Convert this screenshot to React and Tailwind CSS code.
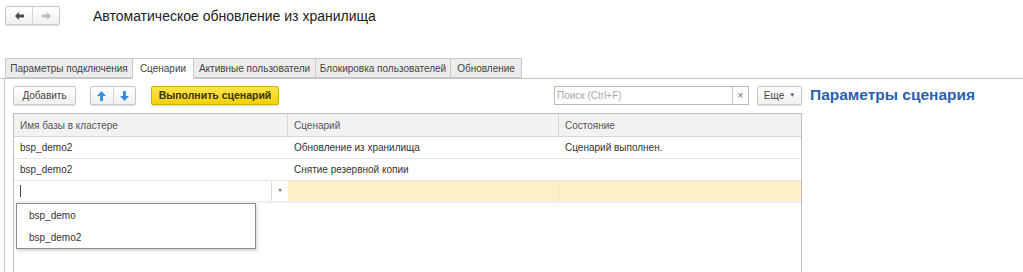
import React from 'react'

const TABS = [
  { label: 'Параметры подключения', w: 'w-[128px]' },
  { label: 'Сценарии', w: 'w-[62px]', active: true },
  { label: 'Активные пользователи', w: 'w-[123px]' },
  { label: 'Блокировка пользователей', w: 'w-[136px]' },
  { label: 'Обновление', w: 'w-[72px]' },
]

const ROWS = [
  { base: 'bsp_demo2', scenario: 'Обновление из хранилища', state: 'Сценарий выполнен.' },
  { base: 'bsp_demo2', scenario: 'Снятие резервной копии', state: '' },
]

const btn =
  'flex items-center justify-center h-[19px] rounded-[2px] border border-[#c6c6c6] bg-gradient-to-b from-white to-[#f0f0f0] shadow-[0_1px_1px_rgba(0,0,0,0.12)]'

function HArrow({ dir = 'left', color }) {
  const d = dir === 'left' ? 'M0 4 L4 0 V2.5 H9 V5.5 H4 V8 Z' : 'M9 4 L5 0 V2.5 H0 V5.5 H5 V8 Z'
  return (
    <svg width="9" height="8" viewBox="0 0 9 8" aria-hidden>
      <path d={d} fill={color} />
    </svg>
  )
}

function VArrow({ dir = 'up' }) {
  const d = dir === 'up' ? 'M4.5 0 L9 5 H6 V10 H3 V5 H0 Z' : 'M4.5 10 L9 5 H6 V0 H3 V5 H0 Z'
  return (
    <svg width="9" height="10" viewBox="0 0 9 10" aria-hidden>
      <path d={d} fill="#3a8ee0" />
    </svg>
  )
}

export default function App() {
  return (
    <div className="w-[1023px] h-[272px] overflow-hidden bg-white font-['Liberation_Sans',Arial,sans-serif] text-[10px] text-[#333]">
      {/* заголовок формы */}
      <div className="h-[58px] pt-[6px] pl-[5px] flex items-start">
        <div className="flex h-[19px] w-[55px] rounded-[2px] border border-[#c6c6c6] bg-gradient-to-b from-white to-[#f0f0f0] shadow-[0_1px_1px_rgba(0,0,0,0.12)]">
          <div className="flex-1 flex items-center justify-center border-r border-[#d4d4d4]">
            <HArrow dir="left" color="#4a4a4a" />
          </div>
          <div className="flex-1 flex items-center justify-center">
            <HArrow dir="right" color="#bdbdbd" />
          </div>
        </div>
        <div className="ml-[33px] text-[14px] leading-[20px] text-[#222] whitespace-nowrap">
          Автоматическое обновление из хранилища
        </div>
      </div>

      {/* вкладки */}
      <div className="flex items-end h-[21px] pl-[5px] border-b border-[#c4c4c4]">
        {TABS.map((t) => (
          <div
            key={t.label}
            className={`${t.w} -mr-px flex items-center justify-center whitespace-nowrap border border-[#c9c9c9] text-[#444] ${
              t.active ? 'h-[21px] -mb-px bg-white border-b-white' : 'h-[20px] bg-[#ececec]'
            }`}
          >
            {t.label}
          </div>
        ))}
      </div>

      {/* содержимое вкладки */}
      <div className="ml-[4px] h-[193px] border-l border-[#c4c4c4] pl-[8px] pt-[7px] flex">
        <div className="w-[789px] flex flex-col">
          <div className="flex items-center h-[19px]">
            <div className={`${btn} w-[63px] text-[#444]`}>Добавить</div>
            <div className="ml-[14px] flex h-[19px] w-[46px] rounded-[2px] border border-[#c6c6c6] bg-gradient-to-b from-white to-[#f0f0f0] shadow-[0_1px_1px_rgba(0,0,0,0.12)]">
              <div className="flex-1 flex items-center justify-center border-r border-[#d4d4d4]">
                <VArrow dir="up" />
              </div>
              <div className="flex-1 flex items-center justify-center">
                <VArrow dir="down" />
              </div>
            </div>
            <div className="ml-[15px] flex items-center justify-center h-[19px] w-[128px] rounded-[2px] border border-[#d2b000] bg-gradient-to-b from-[#fbe647] to-[#f3d000] shadow-[0_1px_1px_rgba(0,0,0,0.15)] font-bold text-[10.5px] text-[#3b3300] whitespace-nowrap">
              Выполнить сценарий
            </div>
            <div className="ml-auto flex h-[19px] w-[195px] border border-[#b8b8b8] bg-white">
              <div className="flex-1 flex items-center pl-[2px] text-[#a8a8a8]">Поиск (Ctrl+F)</div>
              <div className="w-[16px] flex items-center justify-center border-l border-[#c8c8c8] text-[10px] text-[#666]">
                ×
              </div>
            </div>
            <div className={`${btn} ml-[8px] w-[45px] text-[#444] gap-[5px]`}>
              <span>Еще</span>
              <span className="text-[6px] text-[#555]">▼</span>
            </div>
          </div>

          {/* таблица */}
          <div className="relative mt-[8px] flex-1 border-l border-r border-t border-[#bdbdbd]">
            <div className="grid grid-cols-[274px_271px_1fr] h-[23px] bg-[#f2f2f2] border-b border-[#d6d6d6] text-[#555]">
              <div className="flex items-center px-[6px] border-r border-[#d6d6d6]">Имя базы в кластере</div>
              <div className="flex items-center px-[6px] border-r border-[#d6d6d6]">Сценарий</div>
              <div className="flex items-center px-[6px]">Состояние</div>
            </div>
            {ROWS.map((r, i) => (
              <div key={i} className="grid grid-cols-[274px_271px_1fr] h-[22px] border-b border-[#e6e6e6]">
                <div className="flex items-center px-[6px]">{r.base}</div>
                <div className="flex items-center px-[6px]">{r.scenario}</div>
                <div className="flex items-center px-[6px]">{r.state}</div>
              </div>
            ))}
            <div className="grid grid-cols-[274px_271px_1fr] h-[22px] border-b-2 border-[#efefef]">
              <div className="flex bg-white">
                <div className="flex-1 flex items-center pl-[6px]">
                  <span className="w-px h-[12px] bg-[#444]" />
                </div>
                <div className="w-[17px] flex items-center justify-center border-l border-[#dcdcdc] text-[5px] text-[#555]">
                  ▼
                </div>
              </div>
              <div className="bg-[#fdf0c6] border-r border-[#f3e4b4]" />
              <div className="bg-[#fdf0c6]" />
            </div>

            {/* выпадающий список */}
            <div className="absolute left-[2px] top-[89px] w-[240px] h-[46px] border border-[#8c8c8c] bg-white shadow-[1px_2px_3px_rgba(0,0,0,0.18)] flex flex-col justify-center pl-[12px] text-[#333]">
              <div className="h-[22px] flex items-center">bsp_demo</div>
              <div className="h-[22px] flex items-center">bsp_demo2</div>
            </div>
          </div>
        </div>

        <div className="ml-[8px] -mt-[1px] text-[15.5px] leading-[20px] font-bold text-[#2b5fae] h-[20px] whitespace-nowrap">
          Параметры сценария
        </div>
      </div>
    </div>
  )
}
